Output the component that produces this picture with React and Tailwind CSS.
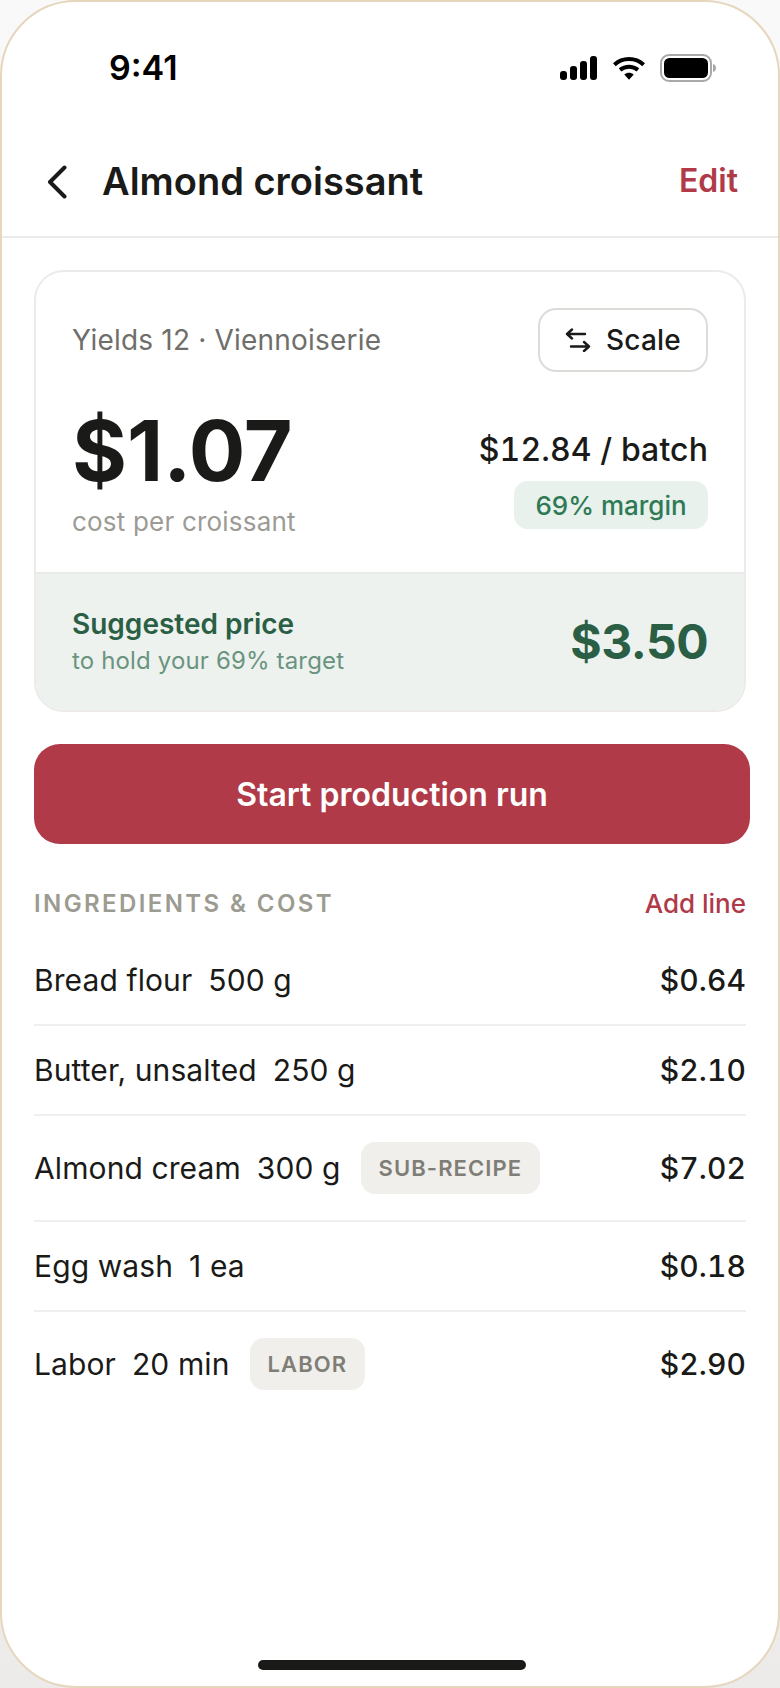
export default function App() {
  const rows = [
    { name: "Bread flour", qty: "500 g", price: "$0.64" },
    { name: "Butter, unsalted", qty: "250 g", price: "$2.10" },
    { name: "Almond cream", qty: "300 g", price: "$7.02", chip: "SUB-RECIPE" },
    { name: "Egg wash", qty: "1 ea", price: "$0.18" },
    { name: "Labor", qty: "20 min", price: "$2.90", chip: "LABOR" },
  ];
  return (
    <div className="w-[780px] h-[1688px] bg-gradient-to-b from-[#f9f9f9] to-[#ecebe9] font-['Inter',sans-serif] text-[#1a1a18]">
      <div className="relative flex flex-col w-full h-full bg-white border-2 border-[#e6d6bd] rounded-[76px] overflow-hidden">
        <div className="flex items-center justify-between h-[128px] pl-[107px] pr-[62px] pt-[4px]">
          <span className="text-[34px] font-semibold leading-none text-black">9:41</span>
          <div className="flex items-center">
            <svg width="38" height="26" viewBox="0 0 38 26" fill="#000" className="mr-[14px]">
              <rect x="0" y="16" width="7" height="9" rx="3" />
              <rect x="10" y="11" width="7" height="14" rx="3" />
              <rect x="20" y="6" width="7" height="19" rx="3" />
              <rect x="30" y="1" width="7" height="24" rx="3" />
            </svg>
            <svg width="34" height="26" viewBox="0 0 36 26" fill="none" stroke="#000" strokeWidth="4.2" className="mr-[14px]">
              <path d="M2.500 9.500C11 1.500 25 1.500 33.500 9.500" />
              <path d="M8.500 15C14 10.500 22 10.500 27.500 15" />
              <path d="M13 20L18 25.500L23 20C20 17.500 16 17.500 13 20Z" fill="#000" stroke="none" />
            </svg>
            <svg width="56" height="28" viewBox="0 0 56 28" fill="none">
              <rect x="1" y="1" width="50" height="26" rx="8" stroke="#a9a9a9" strokeWidth="2" />
              <rect x="4" y="4" width="44" height="20" rx="5.500" fill="#000" />
              <path d="M53 10C55 10.500 56 12 56 14C56 16 55 17.500 53 18Z" fill="#a9a9a9" />
            </svg>
          </div>
        </div>

        <div className="flex items-center justify-between h-[108px] pl-[44px] pr-[40px] pb-[4px] border-b-2 border-[#ebebe9]">
          <div className="flex items-center gap-[35px]">
            <svg width="22" height="34" viewBox="0 0 22 34" fill="none" stroke="#1a1a18" strokeWidth="4" strokeLinecap="round" strokeLinejoin="round" className="mt-[1px]">
              <path d="M18.500 2.500L4 17L18.500 31.500" />
            </svg>
            <h1 className="text-[38px] font-semibold leading-[44px] -ml-[1px]">Almond croissant</h1>
          </div>
          <span className="text-[32px] font-semibold leading-[36px] text-[#b03a48]">Edit</span>
        </div>

        <div className="flex flex-col px-[32px] pt-[32px]">
          <div className="w-[712px] h-[442px] flex flex-col border-2 border-[#ecebe9] rounded-[30px] overflow-hidden">
            <div className="flex-1 flex flex-col px-[36px] pt-[36px]">
              <div className="flex items-center justify-between">
                <span className="text-[28px] leading-[34px] tracking-[0.2px] text-[#6f6e6a]">Yields 12 · Viennoiserie</span>
                <button className="flex items-center justify-center gap-[15px] w-[170px] h-[64px] border-2 border-[#dddcd9] rounded-[18px] bg-white text-[28px] font-medium tracking-[0.2px]">
                  <svg width="26" height="24" viewBox="0 0 26 24" fill="none" stroke="#1a1a18" strokeWidth="2.400" strokeLinecap="round" strokeLinejoin="round">
                    <path d="M20 6H2M7 1.500L2 6L7 10.500" />
                    <path d="M6 18.500H24M19 14L24 18.500L19 23" />
                  </svg>
                  Scale
                </button>
              </div>
              <div className="flex justify-between mt-[31px]">
                <div className="flex flex-col">
                  <span className="text-[84px] font-bold leading-[96px]">$1.07</span>
                  <span className="text-[26px] leading-[32px] tracking-[0.2px] text-[#9c9b95] mt-[7px]">cost per croissant</span>
                </div>
                <div className="flex flex-col items-end pt-[27px]">
                  <span className="text-[32px] font-[550] leading-[40px] tabular-nums tracking-[0.1px]">$12.84 / batch</span>
                  <span className="flex items-center justify-center w-[194px] h-[48px] mt-[11px] rounded-[14px] bg-[#e8f1ec] text-[#2f7a55] text-[26px] font-medium">69% margin</span>
                </div>
              </div>
            </div>
            <div className="flex items-center justify-between h-[138px] px-[36px] border-t-2 border-[#e9ebe8] bg-[#edf2ee]">
              <div className="flex flex-col">
                <span className="text-[28px] font-semibold leading-[34px] -mt-[1px] text-[#2b5f45]">Suggested price</span>
                <span className="text-[24px] leading-[30px] tracking-[0.15px] text-[#6a9480] mt-[5px]">to hold your 69% target</span>
              </div>
              <span className="text-[48px] font-bold leading-[60px] tracking-[-0.5px] text-[#2b5f45]">$3.50</span>
            </div>
          </div>

          <button className="w-[716px] h-[100px] mt-[32px] pt-[2px] rounded-[26px] bg-[#b03a48] text-white text-[32px] font-semibold">Start production run</button>

          <div className="flex items-center justify-between w-[712px] mt-[44px]">
            <span className="text-[24px] font-semibold leading-[32px] tracking-[2.4px] text-[#9c9b92]">INGREDIENTS &amp; COST</span>
            <span className="text-[26px] font-[550] leading-[32px] text-[#b03a48]">Add line</span>
          </div>

          <div className="flex flex-col w-[712px] mt-[16px]">
            {rows.map((r, i) => (
              <div key={r.name} className={"flex items-center justify-between py-[26px] " + (i < rows.length - 1 ? "border-b-2 border-[#f0efed]" : "")}>
                <div className="flex items-center text-[30px] leading-[36px] tracking-[0.1px]">
                  <span>{r.name}</span>
                  <span className="ml-[16px]">{r.qty}</span>
                  {r.chip && (
                    <span className="flex items-center h-[52px] ml-[20px] px-[18px] rounded-[14px] bg-[#f0efeb] text-[#7e7d76] text-[22px] font-semibold tracking-[1.1px]">{r.chip}</span>
                  )}
                </div>
                <span className="text-[30px] font-[550] leading-[36px] tabular-nums tracking-[0.1px]">{r.price}</span>
              </div>
            ))}
          </div>
        </div>

        <div className="absolute bottom-[16px] left-[256px] w-[268px] h-[10px] rounded-full bg-[#1a1a18]" />
      </div>
    </div>
  );
}
